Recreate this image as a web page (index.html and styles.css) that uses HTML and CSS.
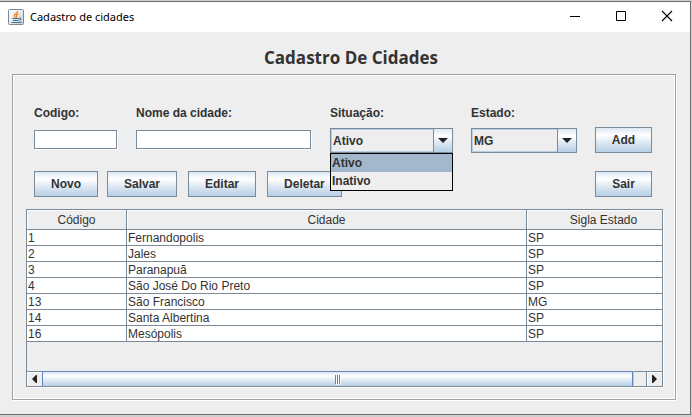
FILE: index.html
```html
<!DOCTYPE html>
<html lang="pt-BR">
<head>
<meta charset="utf-8">
<title>Cadastro de cidades</title>
<link rel="stylesheet" href="styles.css">
</head>
<body>
<div class="window">
  <header class="titlebar">
    <svg class="app-icon" width="16" height="16" viewBox="0 0 16 16" aria-hidden="true">
      <defs><linearGradient id="tile" x1="0" y1="0" x2="1" y2="1"><stop offset="0" stop-color="#fff"/><stop offset="1" stop-color="#c9d1d9"/></linearGradient></defs>
      <rect x=".5" y=".5" width="15" height="15" rx="1" fill="url(#tile)" stroke="#77899a"/>
      <path d="M9.5 2.2C10 4 5.800 4.800 6.300 6.700c.2.800 1 1.100.9 2M10.500 4.700C8.800 5.400 8 6 8.500 7c.3.600.2 1-.2 1.600" fill="none" stroke="#ee7c1c" stroke-width="1.200"/>
      <path d="M4.500 9.500h6.500M5 11.500h5.500M11.300 9c2-.4 2 1.700-.3 2.200M3.500 13.500h8.500c.8 0 1.300-.3 1.500-.7" fill="none" stroke="#456f91" stroke-width="1.100"/>
    </svg>
    <span class="caption">Cadastro de cidades</span>
    <div class="window-controls">
      <button type="button" aria-label="Minimizar"><svg width="12" height="12" viewBox="0 0 12 12"><path d="M1 6.500h10" stroke="#000"/></svg></button>
      <button type="button" aria-label="Maximizar"><svg width="12" height="12" viewBox="0 0 12 12"><path d="M1.500 1.500h9v9h-9z" fill="none" stroke="#000"/></svg></button>
      <button type="button" aria-label="Fechar"><svg width="12" height="12" viewBox="0 0 12 12"><path d="M1 1l10 10M11 1L1 11" stroke="#000" stroke-width="1.100"/></svg></button>
    </div>
  </header>
  <main class="content">
    <h1>Cadastro De Cidades</h1>
    <form class="panel">
      <div class="fields">
        <label for="codigo">Codigo:</label>
        <label for="nome">Nome da cidade:</label>
        <label for="situacao">Situação:</label>
        <label for="estado">Estado:</label>
        <span></span>
        <input id="codigo" type="text">
        <input id="nome" type="text">
        <div class="combo">
          <select id="situacao"><option>Ativo</option><option>Inativo</option></select>
          <span class="arrow"></span>
          <ul class="popup" role="listbox" aria-label="Situação">
            <li class="selected" role="option" aria-selected="true">Ativo</li>
            <li role="option" aria-selected="false">Inativo</li>
          </ul>
        </div>
        <div class="combo">
          <select id="estado"><option>MG</option><option>SP</option></select>
          <span class="arrow"></span>
        </div>
        <button class="btn" type="button">Add</button>
      </div>
      <div class="actions">
        <div class="pair">
          <button class="btn" type="button">Novo</button>
          <button class="btn" type="button">Salvar</button>
        </div>
        <button class="btn" type="button">Editar</button>
        <button class="btn" type="button">Deletar</button>
        <button class="btn exit" type="button">Sair</button>
      </div>
      <div class="pane">
        <div class="viewport">
          <table>
            <colgroup><col class="col-code"><col class="col-city"><col></colgroup>
            <thead><tr><th>Código</th><th>Cidade</th><th>Sigla Estado</th></tr></thead>
            <tbody>
              <tr><td>1</td><td>Fernandopolis</td><td>SP</td></tr>
              <tr><td>2</td><td>Jales</td><td>SP</td></tr>
              <tr><td>3</td><td>Paranapuã</td><td>SP</td></tr>
              <tr><td>4</td><td>São José Do Rio Preto</td><td>SP</td></tr>
              <tr><td>13</td><td>São Francisco</td><td>MG</td></tr>
              <tr><td>14</td><td>Santa Albertina</td><td>SP</td></tr>
              <tr><td>16</td><td>Mesópolis</td><td>SP</td></tr>
            </tbody>
          </table>
        </div>
        <div class="scrollbar">
          <button type="button" aria-label="Rolar para a esquerda"><svg width="5" height="8" viewBox="0 0 5 8"><path d="M5 0v8L4 8 0 4 4 0z" fill="#222"/></svg></button>
          <div class="track"><div class="thumb"><i></i><i></i><i></i></div></div>
          <button type="button" aria-label="Rolar para a direita"><svg width="5" height="8" viewBox="0 0 5 8"><path d="M0 0v8L1 8 5 4 1 0z" fill="#222"/></svg></button>
        </div>
      </div>
    </form>
  </main>
</div>
</body>
</html>
```
FILE: styles.css
```css
:root {
  --line: #7a8a99;
  --face: #eeeeee;
  --blue: #b8cfe5;
  --metal: linear-gradient(#dde8f3, #ffffff 30%, #dde8f3 60%, #b8cfe5);
}

* { box-sizing: border-box; }

body {
  display: flex;
  height: 100vh;
  margin: 0;
  padding: 1px 1px 2px 0;
  background: #cfcfcf;
  color: #333333;
  font: 12px/16px "Liberation Sans", Arial, sans-serif;
}

button, input, select { font: inherit; color: inherit; margin: 0; }

.window {
  display: flex;
  flex: 1;
  flex-direction: column;
  min-width: 0;
  border: 1px solid #707070;
  border-left: 0;
  background: var(--face);
}

.titlebar {
  display: flex;
  align-items: center;
  height: 30px;
  padding-left: 8px;
  background: #ffffff;
  color: #000000;
  font-family: "Noto Sans", "Open Sans", sans-serif;
  font-size: 11px;
}

.caption { margin-left: 6px; }

.window-controls { display: flex; height: 100%; margin-left: auto; }

.window-controls button {
  display: flex;
  align-items: center;
  justify-content: center;
  width: 46px;
  padding: 0 0 2px;
  border: 0;
  background: none;
}

.content {
  display: flex;
  flex: 1;
  flex-direction: column;
  padding: 14px 14px 14px 12px;
}

h1 {
  margin: 0 0 4px;
  padding-left: 14px;
  font: bold 17px/24px "Open Sans", "Noto Sans", sans-serif;
  text-align: center;
}

.panel {
  display: flex;
  flex: 1;
  flex-direction: column;
  padding: 30px 12px 12px;
  border: 1px solid #a0a0a0;
  outline: 1px solid #ffffff;
  outline-offset: -2px;
  box-shadow: 1px 1px #ffffff;
}

.fields {
  display: grid;
  grid-template-columns: 84px minmax(0, 1fr) 123px 106px 57px;
  column-gap: 18px;
  row-gap: 6px;
  align-items: center;
  padding: 0 11px 0 9px;
  font-weight: bold;
}

.fields input {
  width: calc(100% - 1px);
  height: 19px;
  margin: 0 1px 1px 0;
  padding: 0 3px;
  border: 1px solid var(--line);
  background: #ffffff;
  box-shadow: 1px 1px #ffffff;
}

.combo { position: relative; height: 25px; }

.combo select {
  width: 100%;
  height: 100%;
  padding: 1px 22px 0 2px;
  border: 1px solid var(--line);
  border-radius: 0;
  outline: 0;
  appearance: none;
  background: var(--face);
  box-shadow: inset 0 0 0 1px var(--blue);
  font-weight: bold;
}

.arrow {
  position: absolute;
  top: 0;
  right: 0;
  display: grid;
  place-items: center;
  width: 20px;
  height: 100%;
  border: 1px solid var(--line);
  background: var(--metal);
  pointer-events: none;
}

.arrow::after {
  content: "";
  border: 5px solid transparent;
  border-top-color: #222222;
  border-bottom: 0;
}

.popup {
  position: absolute;
  z-index: 1;
  top: 100%;
  left: 0;
  width: 100%;
  margin: 0;
  padding: 0;
  border: 1px solid #000000;
  background: var(--face);
  line-height: 18px;
  list-style: none;
}

.popup li { padding-left: 1px; }
.popup .selected { background: #a3b8cc; }

.btn {
  height: 26px;
  padding: 0 16px;
  border: 1px solid var(--line);
  border-radius: 0;
  background: var(--metal);
  font-weight: bold;
  white-space: nowrap;
}

.exit.btn, .fields .btn { padding: 0; }

.actions {
  display: flex;
  gap: 11px;
  padding: 18px 11px 12px 9px;
}

.pair { display: flex; gap: 9px; }

.exit { width: 57px; margin-left: auto; }

.pane {
  display: flex;
  flex: 1;
  flex-direction: column;
  margin-left: 1px;
  border: 1px solid var(--line);
  box-shadow: 1px 1px #ffffff;
}

.viewport { flex: 1; overflow: hidden; }

table {
  width: 103%;
  border-collapse: separate;
  border-spacing: 0;
  table-layout: fixed;
}

.col-code { width: 100px; }
.col-city { width: 400px; }

th, td {
  height: 16px;
  padding: 2px 1px 0;
  border: solid var(--line);
  border-width: 0 1px 1px 0;
  line-height: 13px;
  overflow: hidden;
  white-space: nowrap;
}

th {
  height: 20px;
  background: var(--face);
  box-shadow: inset 1px 1px #ffffff;
  font-weight: normal;
}

td { background: #ffffff; }

.scrollbar {
  display: flex;
  height: 15px;
  border-top: 1px solid var(--line);
}

.scrollbar button {
  display: grid;
  place-items: center;
  width: 15px;
  padding: 0;
  border: 0;
  background: var(--face);
  box-shadow: inset 1px 1px #ffffff;
}

.track {
  display: flex;
  flex: 1;
  margin-top: -1px;
  padding-right: 13px;
  border-right: 1px solid var(--line);
}

.thumb {
  display: flex;
  flex: 1;
  align-items: center;
  justify-content: center;
  gap: 1px;
  border: 1px solid #6382bf;
  border-bottom: 0;
  background: var(--metal);
  box-shadow: 1px 0 var(--blue);
}

.thumb i {
  width: 1px;
  height: 9px;
  background: #6382bf;
  box-shadow: 1px 1px #ffffff;
}
```
